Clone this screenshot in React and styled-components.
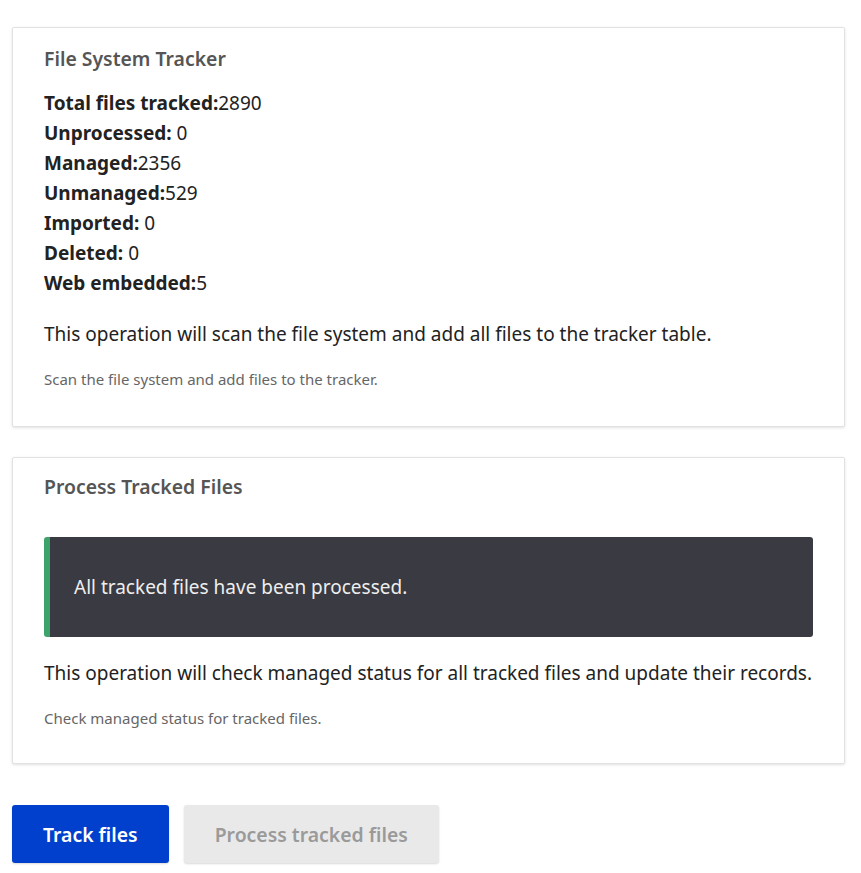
import React from 'react'
import styled, { createGlobalStyle } from 'styled-components'

const GlobalStyle = createGlobalStyle`
  body {
    margin: 0;
    background: #fff;
    font-family: "Noto Sans", "Open Sans", sans-serif;
    color: #222;
  }
`

const stats = [
  { label: 'Total files tracked:', value: '2890' },
  { label: 'Unprocessed:', value: ' 0' },
  { label: 'Managed:', value: '2356' },
  { label: 'Unmanaged:', value: '529' },
  { label: 'Imported:', value: ' 0' },
  { label: 'Deleted:', value: ' 0' },
  { label: 'Web embedded:', value: '5' },
]

const App = () => {
  return (
    <Page>
      <GlobalStyle />
      <Card>
        <Title>File System Tracker</Title>
        <Stats>
          {stats.map(s => (
            <StatRow key={s.label}>
              <strong>{s.label}</strong>{s.value}
            </StatRow>
          ))}
        </Stats>
        <Lead>This operation will scan the file system and add all files to the tracker table.</Lead>
        <Hint>Scan the file system and add files to the tracker.</Hint>
      </Card>
      <Card>
        <Title>Process Tracked Files</Title>
        <Alert>All tracked files have been processed.</Alert>
        <Lead>This operation will check managed status for all tracked files and update their records.</Lead>
        <Hint>Check managed status for tracked files.</Hint>
      </Card>
      <Actions>
        <Button primary>Track files</Button>
        <Button disabled>Process tracked files</Button>
      </Actions>
    </Page>
  )
}

const Page = styled.div`
  padding: 27px 16px 10px 12px;
  display: flex;
  flex-direction: column;
  gap: 30px;
`

const Card = styled.section`
  background: #fff;
  border: 1px solid #e2e2e2;
  border-radius: 2px;
  box-shadow: 0 1px 3px rgba(0, 0, 0, 0.12);
  padding: 18px 31px 37px;

  & + & {
    padding-top: 16px;
    padding-bottom: 35px;
  }
`

const Title = styled.h2`
  margin: 0;
  font-size: 19.4px;
  font-weight: 600;
  color: #555;
  line-height: 26px;
`

const Stats = styled.div`
  margin-top: 16px;
  display: flex;
  flex-direction: column;
`

const StatRow = styled.div`
  font-size: 19px;
  line-height: 30px;
  color: #222;
  white-space: pre;

  strong {
    font-weight: 700;
  }
`

const Lead = styled.p`
  margin: 22px 0 0;
  font-size: 19px;
  line-height: 28px;
  color: #222;
  white-space: nowrap;
`

const Hint = styled.p`
  margin: 21px 0 0;
  font-size: 15px;
  line-height: 20px;
  color: #666;
`

const Alert = styled.div`
  margin-top: 37px;
  margin-bottom: 6px;
  height: 100px;
  display: flex;
  align-items: center;
  background: #393a42;
  border-left: 6px solid #3ea26b;
  border-radius: 3px;
  padding: 0 24px;
  font-size: 19px;
  color: #eee;
`

const Actions = styled.div`
  display: flex;
  gap: 15px;
  margin-top: 11px;
`

const Button = styled.button`
  height: 58px;
  padding: 0 31px;
  border: 0;
  border-radius: 3px;
  font-family: inherit;
  font-size: 19.4px;
  font-weight: 600;
  background: ${props => (props.primary ? '#0040cc' : '#e9e9ea')};
  color: ${props => (props.primary ? '#fff' : '#9a9a9a')};
  box-shadow: 0 1px 2px rgba(0, 0, 0, 0.15);
  cursor: ${props => (props.disabled ? 'default' : 'pointer')};
`

export default App
